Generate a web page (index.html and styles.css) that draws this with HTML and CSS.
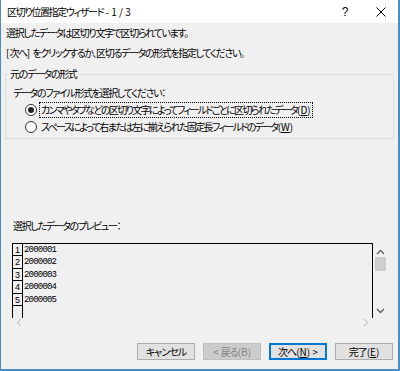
FILE: index.html
```html
<!DOCTYPE html>
<html lang="ja">
<head>
  <meta charset="UTF-8">
  <title>区切り位置指定ウィザード - 1/3</title>
  <link rel="stylesheet" href="styles.css">
</head>
<body>
  <div class="window">
    <div class="titlebar">
      <span class="title">区切り位置指定ウィザード<span class="latin"> - 1 / 3</span></span>
      <span class="help">?</span>
      <span class="close">
        <svg width="10" height="10" viewBox="0 0 10 10">
          <path d="M0.5 0.5 L9.5 9.5 M9.5 0.5 L0.5 9.5" stroke="#000" stroke-width="1"/>
        </svg>
      </span>
    </div>

    <div class="content">
      <p class="intro">選択したデータは区切り文字で区切られています。</p>
      <p class="intro"><span class="latin">[</span>次へ<span class="latin">] </span>をクリックするか、区切るデータの形式を指定してください。</p>

      <fieldset class="group">
        <legend>元のデータの形式</legend>
        <p class="group-text">データのファイル形式を選択してください：</p>
        <label class="radio">
          <span class="circle checked"></span>
          <span class="radio-text focus">カンマやタブなどの区切り文字によってフィールドごとに区切られたデータ<span class="latin">(<u>D</u>)</span></span>
        </label>
        <label class="radio">
          <span class="circle"></span>
          <span class="radio-text">スペースによって右または左に揃えられた固定長フィールドのデータ<span class="latin">(<u>W</u>)</span></span>
        </label>
      </fieldset>

      <p class="preview-label">選択したデータのプレビュー：</p>

      <div class="preview">
        <div class="preview-main">
          <div class="grid">
            <div class="row"><span class="num">1</span><span class="cell">2000001</span></div>
            <div class="row"><span class="num">2</span><span class="cell">2000002</span></div>
            <div class="row"><span class="num">3</span><span class="cell">2000003</span></div>
            <div class="row"><span class="num">4</span><span class="cell">2000004</span></div>
            <div class="row"><span class="num">5</span><span class="cell">2000005</span></div>
            <div class="row last"><span class="num"></span><span class="cell"></span></div>
          </div>
          <div class="vscroll">
            <svg class="arrow" width="9" height="6" viewBox="0 0 9 6"><path d="M1 5 L4.5 1.5 L8 5" fill="none" stroke="#606060" stroke-width="1.4"/></svg>
            <div class="thumb"></div>
            <div class="track"></div>
            <svg class="arrow" width="9" height="6" viewBox="0 0 9 6"><path d="M1 1 L4.5 4.5 L8 1" fill="none" stroke="#606060" stroke-width="1.4"/></svg>
          </div>
        </div>
        <div class="hscroll">
          <svg width="6" height="9" viewBox="0 0 6 9"><path d="M5 1 L1.5 4.5 L5 8" fill="none" stroke="#c8c8c8" stroke-width="1.2"/></svg>
          <svg width="6" height="9" viewBox="0 0 6 9"><path d="M1 1 L4.5 4.5 L1 8" fill="none" stroke="#c8c8c8" stroke-width="1.2"/></svg>
        </div>
      </div>

      <div class="buttons">
        <button class="btn">キャンセル</button>
        <button class="btn" disabled><span class="latin">&lt; </span>戻る<span class="latin">(B)</span></button>
        <button class="btn default">次へ<span class="latin">(<u>N</u>) &gt;</span></button>
        <button class="btn">完了<span class="latin">(<u>E</u>)</span></button>
      </div>
    </div>
  </div>
</body>
</html>
```

FILE: styles.css
```css
* {
  margin: 0;
  padding: 0;
  box-sizing: border-box;
}

body {
  width: 400px;
  height: 371px;
  background: #f0f0f0;
  font-family: "Noto Sans CJK JP", "Noto Sans", sans-serif;
  font-size: 10px;
  letter-spacing: -1.35px;
  font-feature-settings: "palt";
  color: #000;
  overflow: hidden;
}

.latin {
  letter-spacing: 0;
}

.window {
  width: 400px;
  height: 371px;
  border-left: 1px solid #4a8dc4;
  border-right: 2px solid #4a8dc4;
  border-bottom: 2px solid #4a8dc4;
  display: flex;
  flex-direction: column;
}

.titlebar {
  height: 23px;
  background: #fff;
  display: flex;
  align-items: center;
  padding-left: 6px;
}

.title {
  flex: 1;
}

.help {
  width: 36px;
  margin-right: 13px;
  text-align: center;
  font-family: "Liberation Sans", sans-serif;
  font-size: 12px;
  letter-spacing: 0;
}

.close {
  width: 10px;
  margin-right: 12px;
  display: flex;
  align-items: center;
}

.content {
  flex: 1;
  display: flex;
  flex-direction: column;
  padding: 0 4px 0 4px;
}

.intro {
  line-height: 20px;
  padding-left: 1px;
}

/* group box */
.group {
  margin-top: 4px;
  border: 1px solid #dcdcdc;
  padding: 4px 6px 3px 7px;
}

.group legend {
  margin-left: -5px;
  padding: 0 2px;
  line-height: 14px;
}

.group-text {
  line-height: 16px;
}

.radio {
  display: flex;
  align-items: center;
  height: 17px;
  padding-left: 12px;
}

.circle {
  width: 12px;
  height: 12px;
  border: 1px solid #333;
  border-radius: 50%;
  background: #fff;
  margin-right: 2px;
  display: flex;
  align-items: center;
  justify-content: center;
}

.circle.checked::after {
  content: "";
  width: 6px;
  height: 6px;
  border-radius: 50%;
  background: #222;
}

.radio-text {
  padding: 0 1px;
  line-height: 14px;
  letter-spacing: -1.65px;
  border: 1px solid transparent;
  white-space: nowrap;
}

.radio-text.focus {
  border: 1px dotted #000;
}

/* preview */
.preview-label {
  margin-top: 79px;
  padding-left: 8px;
  line-height: 16px;
}

.preview {
  margin: 9px 6px 0 7px;
  height: 81px;
  display: flex;
  flex-direction: column;
}

.preview-main {
  flex: 1;
  display: flex;
}

.grid {
  flex: 1;
  border-top: 1px solid #000;
  border-left: 1px solid #000;
  border-right: 1px solid #000;
  overflow: hidden;
}

.row {
  display: flex;
  height: 12.4px;
}

.num {
  width: 10px;
  border-right: 1px solid #000;
  border-bottom: 1px solid #000;
  font-family: "Liberation Sans", sans-serif;
  font-size: 9px;
  letter-spacing: 0;
  line-height: 12px;
  text-align: center;
}

.row.last .num {
  border-bottom: none;
}

.cell {
  font-family: "Liberation Mono", monospace;
  font-size: 9px;
  letter-spacing: -0.8px;
  line-height: 12px;
  padding-left: 1px;
}

.vscroll {
  width: 15px;
  display: flex;
  flex-direction: column;
  align-items: center;
  padding: 6px 0 4px;
}

.thumb {
  width: 11px;
  height: 14px;
  margin-top: 2px;
  background: #cdcdcd;
}

.track {
  flex: 1;
}

.hscroll {
  height: 12px;
  margin-right: 15px;
  display: flex;
  justify-content: space-between;
  align-items: center;
  padding: 0 4px;
}

/* buttons */
.buttons {
  margin-top: 19px;
  display: flex;
  justify-content: flex-end;
  gap: 8px;
  padding-right: 1px;
}

.btn {
  width: 58px;
  height: 17px;
  background: #e1e1e1;
  border: 1px solid #adadad;
  font-family: inherit;
  font-size: 10px;
  letter-spacing: -1px;
  font-feature-settings: "palt";
  color: #000;
}

.btn:disabled {
  background: #cccccc;
  border-color: #bfbfbf;
  color: #838383;
}

.btn.default {
  border-color: #0078d7;
  box-shadow: inset 0 0 0 1px #0078d7;
}
```
